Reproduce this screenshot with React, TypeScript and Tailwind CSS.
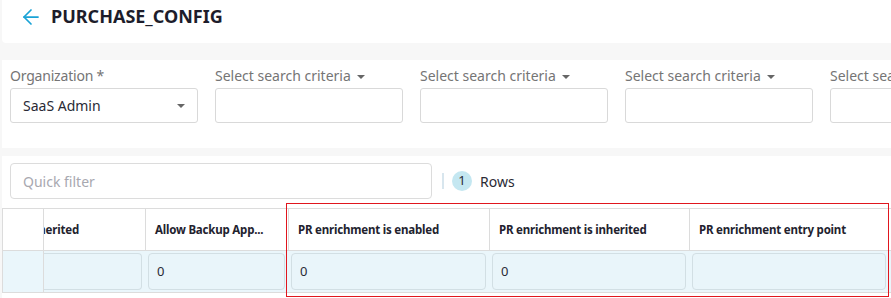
import { ArrowLeft } from 'lucide-react'

const criteria = [0, 1, 2, 3]

const columns = [
    { key: 'pin', label: '', width: 'w-[40px]', value: null },
    { key: 'inh', label: 'herited', width: 'w-[102px]', value: '', clip: true },
    { key: 'backup', label: 'Allow Backup App...', width: 'w-[143px]', value: '0' },
    { key: 'enabled', label: 'PR enrichment is enabled', width: 'w-[201px]', value: '0' },
    { key: 'inherited', label: 'PR enrichment is inherited', width: 'w-[200px]', value: '0' },
    { key: 'entry', label: 'PR enrichment entry point', width: 'w-[200px]', value: '' },
]

function Caret() {
    return <span className="ml-[6px] inline-block h-0 w-0 border-x-[4px] border-t-[4px] border-x-transparent border-t-[#666] align-middle" />
}

export default function App() {
    return (
        <div
            className="h-[298px] w-[891px] overflow-hidden bg-[#f7f7f7] pl-[2px]"
            style={{ fontFamily: '"Noto Sans", "Open Sans", sans-serif' }}
        >
            {/* header */}
            <div className="h-[43px] rounded-bl-[4px] bg-white pl-[17px] pt-[4px]">
                <div className="flex h-[25px] items-center gap-[8px]">
                    <ArrowLeft className="h-[24px] w-[24px] text-[#1aa3d6]" strokeWidth={1.75} />
                    <h1 className="text-[18px] font-bold leading-[25px] text-[#1d1d2b]">PURCHASE_CONFIG</h1>
                </div>
            </div>

            {/* filters */}
            <div className="mt-[17px] flex h-[88px] gap-[17px] bg-white pl-[8px] pt-[5px]">
                <div className="flex w-[188px] shrink-0 flex-col">
                    <label className="h-[23px] whitespace-nowrap text-[14px] leading-[22px] tracking-[-0.2px] text-[#757575]">Organization *</label>
                    <div className="flex h-[35px] items-center justify-between rounded-[3px] border border-[#d9d9d9] px-[12px] text-[14px] text-[#2a2a35]">
                        <span>SaaS Admin</span>
                        <Caret />
                    </div>
                </div>
                {criteria.map((c) => (
                    <div key={c} className="flex w-[188px] shrink-0 flex-col">
                        <label className="h-[23px] whitespace-nowrap text-[14px] leading-[22px] text-[#757575]">
                            Select search criteria
                            <Caret />
                        </label>
                        <div className="h-[35px] rounded-[3px] border border-[#d9d9d9] bg-white" />
                    </div>
                ))}
            </div>

            {/* grid */}
            <div className="relative mt-[8px] h-[150px] bg-white">
                <div className="flex h-[52px] items-center pb-[2px] pl-[8px]">
                    <div className="flex h-[36px] w-[422px] items-center rounded-[4px] border border-[#dcdcdc] px-[12px] text-[14px] text-[#a8a8b0]">
                        Quick filter
                    </div>
                    <div className="ml-[10px] h-[16px] w-[2px] bg-[#d8e6ee]" />
                    <div className="ml-[8px] flex h-[20px] w-[20px] items-center justify-center rounded-full bg-[#c4e7f1] text-[13px] text-[#2a2a35]">1</div>
                    <span className="ml-[8px] text-[14px] text-[#2a2a35]">Rows</span>
                </div>

                <div className="border-y border-l border-[#dcdcdc]">
                    <div className="flex h-[42px] border-b border-[#dcdcdc]">
                        {columns.map((col, i) => (
                            <div
                                key={col.key}
                                className={`${col.width} flex shrink-0 items-center overflow-hidden whitespace-nowrap text-[11.5px] font-bold tracking-[-0.2px] text-[#22222e] ${i > 0 ? 'border-l border-[#dcdcdc]' : ''} ${col.clip ? 'justify-end pr-[66px]' : 'pl-[9px]'}`}
                            >
                                {col.label}
                            </div>
                        ))}
                    </div>
                    <div className="flex h-[41px] bg-[#eaf6fb]">
                        {columns.map((col, i) => (
                            <div
                                key={col.key}
                                className={`${col.width} flex shrink-0 items-center ${i === 1 ? 'border-l border-[#dcdcdc]' : ''} ${col.clip ? 'pr-[3px]' : 'px-[3px]'}`}
                            >
                                {col.value !== null && (
                                    <div className={`flex h-[37px] w-full items-center border border-[#d2dfe4] bg-[#e9f5fa] pl-[8px] text-[13px] text-[#2a2a35] ${col.clip ? 'rounded-r-[4px] border-l-0' : 'rounded-[4px]'}`}>
                                        {col.value}
                                    </div>
                                )}
                            </div>
                        ))}
                    </div>
                </div>

                {/* annotation */}
                <div className="pointer-events-none absolute left-[284px] top-[47px] h-[94px] w-[603px] border border-[#e0161e]" />
            </div>
        </div>
    )
}
